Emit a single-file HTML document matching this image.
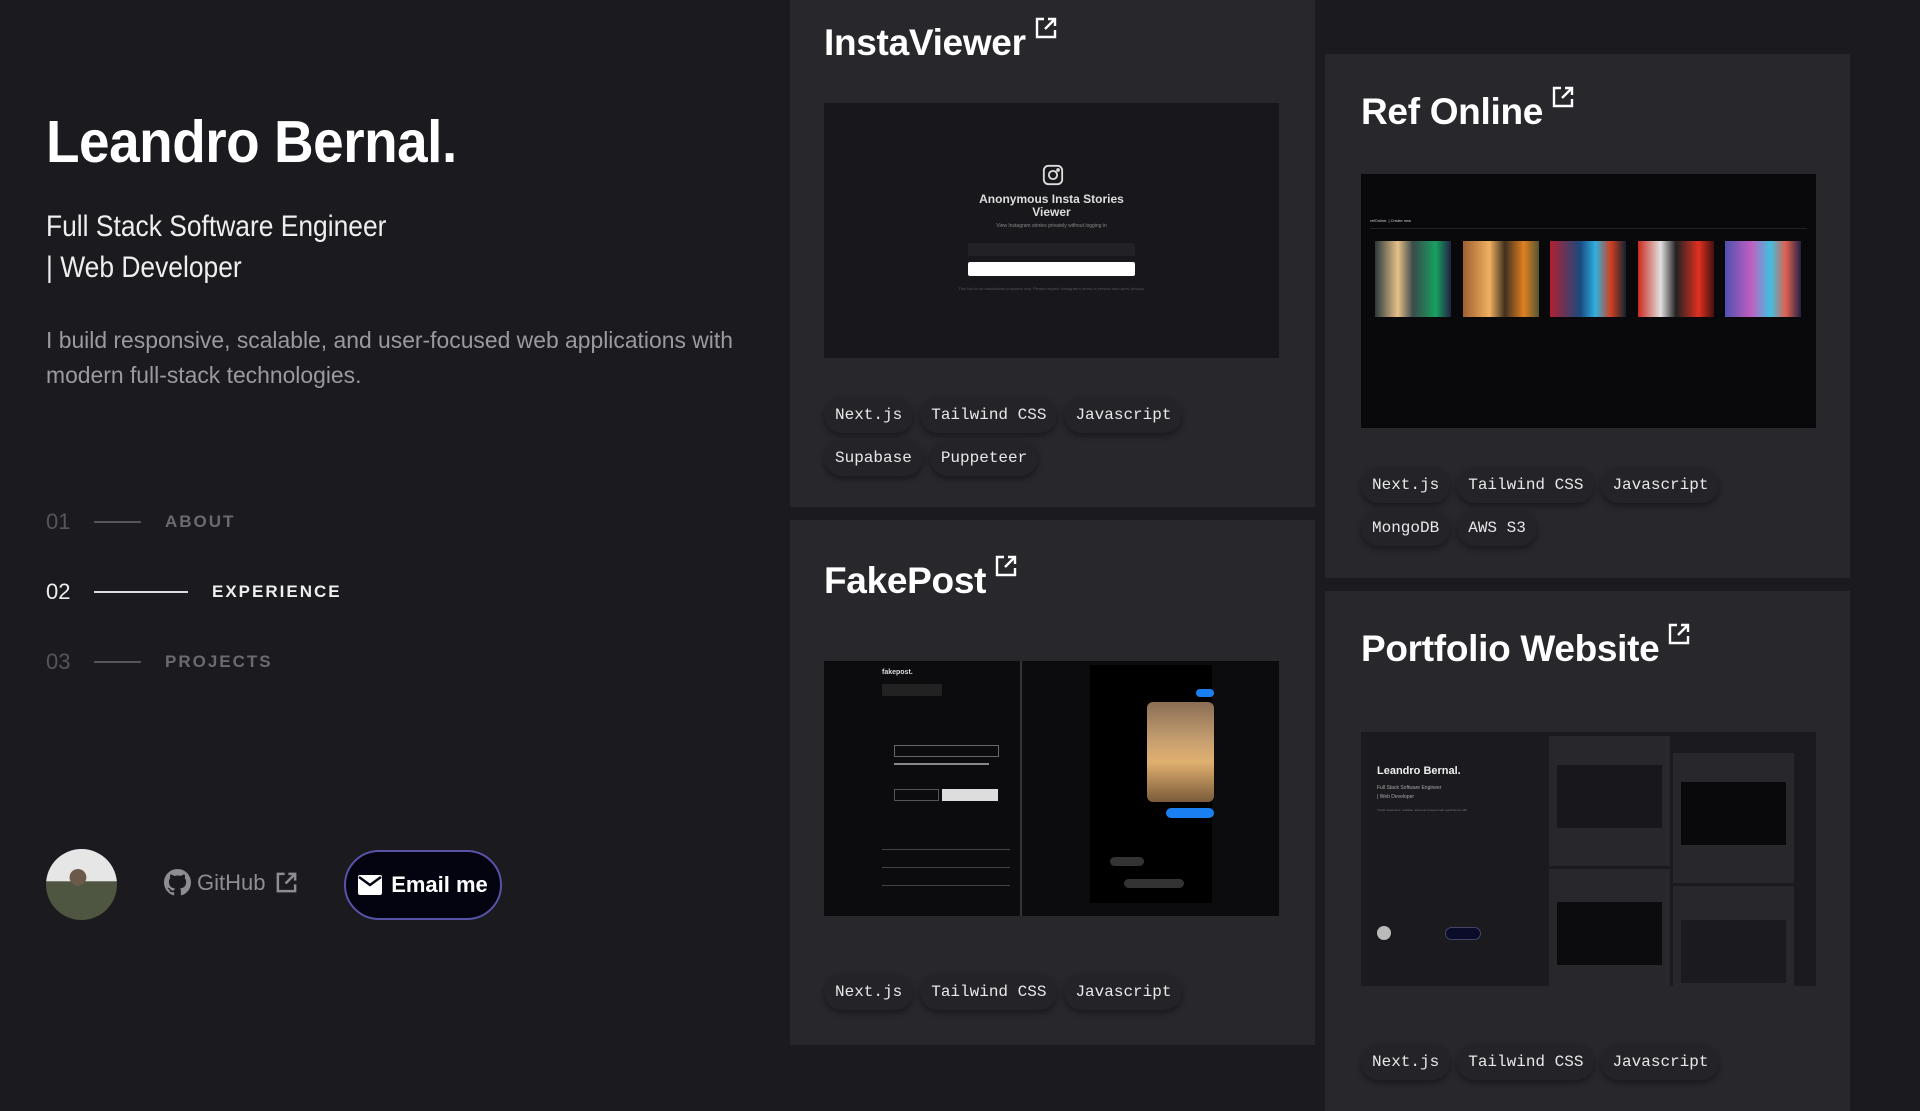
<!DOCTYPE html>
<html><head><meta charset="utf-8"><style>
*{margin:0;padding:0;box-sizing:border-box}
body{width:1920px;height:1080px;background:#1a1a1f;overflow:hidden;position:relative;font-family:"Liberation Sans",sans-serif;color:#fff}
.abs{position:absolute}
.name{left:46px;top:108px;font-size:59px;line-height:68px;font-weight:bold;transform:scaleX(0.93);transform-origin:left top;white-space:nowrap;letter-spacing:-0.5px}
.sub{left:46px;top:206px;font-size:30px;line-height:41px;color:#eee;transform:scaleX(0.88);transform-origin:left top;white-space:nowrap;font-weight:300}
.para{left:46px;top:323px;font-size:23px;line-height:35px;color:#9a9aa0;white-space:nowrap;transform:scaleX(0.995);transform-origin:left top}
.nav{left:46px;display:flex;align-items:center;white-space:nowrap;height:26px}
.nav .n{font-size:22px;width:48px;color:#55555b}
.nav .l{height:2px;background:#55555b;width:47px;margin-right:24px}
.nav .t{font-size:17px;font-weight:bold;letter-spacing:2px;color:#6a6a70}
.card{position:absolute;background:#27272c}
.title{position:absolute;font-size:37px;font-weight:bold;white-space:nowrap;letter-spacing:-0.3px}
.ext{display:inline-block;vertical-align:top;margin-left:8px;margin-top:-6px}
.tags{position:absolute;display:flex;flex-wrap:wrap;gap:7px 7px}
.tag{font-family:"Liberation Mono",monospace;font-size:16px;color:#e8e8ea;background:#242428;border-radius:18px;padding:0 11px;height:36px;line-height:36px;box-shadow:0 3px 6px rgba(0,0,0,.35)}
.shot{position:absolute;overflow:hidden}
</style></head><body>

<div class="abs name">Leandro Bernal.</div>
<div class="abs sub">Full Stack Software Engineer<br>| Web Developer</div>
<div class="abs para">I build responsive, scalable, and user-focused web applications with<br>modern full-stack technologies.</div>

<div class="abs nav" style="top:509px"><span class="n">01</span><span class="l"></span><span class="t">ABOUT</span></div>
<div class="abs nav" style="top:579px"><span class="n" style="color:#eee">02</span><span class="l" style="width:94px;background:#ddd"></span><span class="t" style="color:#eee">EXPERIENCE</span></div>
<div class="abs nav" style="top:649px"><span class="n">03</span><span class="l"></span><span class="t">PROJECTS</span></div>

<div class="abs" style="left:46px;top:849px;width:71px;height:71px;border-radius:50%;background:radial-gradient(circle at 45% 40%,#6b5a4a 0 14%,transparent 15%),linear-gradient(180deg,#e6e6e6 0 45%,#4e5540 46% 100%);overflow:hidden"></div>
<div class="abs" style="left:164px;top:869px;display:flex;align-items:center;color:#8d8d92;font-size:22px">
<svg width="27" height="27" viewBox="0 0 16 16"><path fill="#8d8d92" d="M8 0C3.58 0 0 3.58 0 8c0 3.540 2.29 6.53 5.47 7.59.4.07.55-.17.55-.38 0-.19-.01-.82-.01-1.49-2.01.37-2.530-.49-2.69-.94-.09-.23-.48-.94-.82-1.13-.28-.15-.68-.52-.01-.53.63-.01 1.08.58 1.23.82.72 1.21 1.87.87 2.33.66.07-.52.28-.87.51-1.07-1.78-.2-3.64-.89-3.64-3.95 0-.87.31-1.59.82-2.15-.08-.2-.36-1.02.08-2.12 0 0 .67-.21 2.2.82.64-.18 1.32-.27 2-.27.68 0 1.36.09 2 .27 1.53-1.04 2.2-.82 2.2-.82.44 1.1.16 1.92.08 2.12.51.56.82 1.27.82 2.15 0 3.07-1.87 3.75-3.65 3.95.29.25.54.73.54 1.48 0 1.07-.01 1.93-.01 2.2 0 .21.15.46.55.38A8.013 8.013 0 0016 8c0-4.42-3.58-8-8-8z"/></svg>
<span style="margin-left:6px">GitHub</span>
<svg style="margin-left:10px" width="23" height="23" viewBox="0 0 24 24" fill="none" stroke="#8d8d92" stroke-width="2.6"><path d="M10 3H3v18h18v-7M14 3h7v7M21 3L11 13"/></svg>
</div>
<div class="abs" style="left:344px;top:850px;width:158px;height:70px;border-radius:35px;background:#03040f;border:2px solid #5852a8;display:flex;align-items:center;justify-content:center;font-size:22px;font-weight:bold">
<svg width="24" height="20" viewBox="0 0 24 20"><rect x="0" y="0" width="24" height="20" rx="2" fill="#fff"/><path d="M1 2l11 8 11-8" stroke="#03040f" stroke-width="2.4" fill="none"/></svg>
<span style="margin-left:9px">Email me</span></div>

<!-- InstaViewer -->
<div class="card" style="left:790px;top:0;width:525px;height:507px">
<div class="title" style="left:34px;top:22px">InstaViewer<svg class="ext" width="24" height="24" viewBox="0 0 24 24" fill="none" stroke="#fff" stroke-width="2.4"><path d="M10 3H3v18h18v-7M14 3h7v7M21 3L11 13"/></svg></div>
<div class="shot" style="left:34px;top:103px;width:455px;height:255px;background:#18181c">
 <svg class="abs" style="left:218px;top:61px" width="22" height="22" viewBox="0 0 24 24" fill="none" stroke="#ddd" stroke-width="2"><rect x="2" y="2" width="20" height="20" rx="5"/><circle cx="12" cy="12" r="4.5"/><circle cx="17.5" cy="6.5" r="1" fill="#ddd"/></svg>
 <div class="abs" style="left:0;width:455px;top:90px;text-align:center;font-size:12px;font-weight:bold;color:#ddd;line-height:13px">Anonymous Insta Stories<br>Viewer</div>
 <div class="abs" style="left:0;width:455px;top:120px;text-align:center;font-size:5px;color:#888">View Instagram stories privately without logging in</div>
 <div class="abs" style="left:144px;top:140px;width:167px;height:13px;background:#222226;border-radius:2px"></div>
 <div class="abs" style="left:144px;top:159px;width:167px;height:14px;background:#fff;border-radius:2px"></div>
 <div class="abs" style="left:0;width:455px;top:183px;text-align:center;font-size:4px;color:#555">This tool is for educational purposes only. Please respect Instagram's terms of service and users' privacy.</div>
</div>
<div class="tags" style="left:34px;top:397px;width:440px"><span class="tag">Next.js</span><span class="tag">Tailwind CSS</span><span class="tag">Javascript</span><span class="tag">Supabase</span><span class="tag">Puppeteer</span></div>
</div>

<!-- FakePost -->
<div class="card" style="left:790px;top:520px;width:525px;height:525px">
<div class="title" style="left:34px;top:40px">FakePost<svg class="ext" width="24" height="24" viewBox="0 0 24 24" fill="none" stroke="#fff" stroke-width="2.4"><path d="M10 3H3v18h18v-7M14 3h7v7M21 3L11 13"/></svg></div>
<div class="shot" style="left:34px;top:141px;width:455px;height:255px;background:#0c0c0e">
 <div class="abs" style="left:196px;top:0;width:2px;height:255px;background:#333"></div>
 <div class="abs" style="left:58px;top:8px;font-size:7px;font-weight:bold;color:#ddd">fakepost.</div>
 <div class="abs" style="left:58px;top:23px;width:60px;height:12px;background:#222;border-radius:2px"></div>
 <div class="abs" style="left:70px;top:84px;width:105px;height:12px;border:1px solid #666"></div>
 <div class="abs" style="left:70px;top:102px;width:95px;height:2px;background:#888"></div>
 <div class="abs" style="left:70px;top:128px;width:45px;height:12px;border:1px solid #555"></div>
 <div class="abs" style="left:118px;top:128px;width:56px;height:12px;background:#ddd"></div>
 <div class="abs" style="left:58px;top:188px;width:128px;height:1px;background:#444"></div>
 <div class="abs" style="left:58px;top:206px;width:128px;height:1px;background:#444"></div>
 <div class="abs" style="left:58px;top:224px;width:128px;height:1px;background:#444"></div>
 <div class="abs" style="left:266px;top:4px;width:122px;height:238px;background:#000"></div>
 <div class="abs" style="left:323px;top:41px;width:67px;height:100px;border-radius:6px;background:linear-gradient(180deg,#8a6e55,#c8a070 40%,#e0b070 60%,#7a5a3a)"></div>
 <div class="abs" style="left:342px;top:147px;width:48px;height:10px;background:#1a7ff0;border-radius:6px"></div>
 <div class="abs" style="left:372px;top:28px;width:18px;height:8px;background:#1a7ff0;border-radius:6px"></div>
 <div class="abs" style="left:286px;top:196px;width:34px;height:9px;background:#333;border-radius:6px"></div>
 <div class="abs" style="left:300px;top:218px;width:60px;height:9px;background:#333;border-radius:6px"></div>
</div>
<div class="tags" style="left:34px;top:454px;width:440px"><span class="tag">Next.js</span><span class="tag">Tailwind CSS</span><span class="tag">Javascript</span></div>
</div>

<!-- Ref Online -->
<div class="card" style="left:1325px;top:54px;width:525px;height:524px">
<div class="title" style="left:36px;top:37px">Ref Online<svg class="ext" width="24" height="24" viewBox="0 0 24 24" fill="none" stroke="#fff" stroke-width="2.4"><path d="M10 3H3v18h18v-7M14 3h7v7M21 3L11 13"/></svg></div>
<div class="shot" style="left:36px;top:120px;width:455px;height:254px;background:#09090b">
 <div class="abs" style="left:9px;top:44px;font-size:4px;color:#ccc">refOnline. | Create new</div>
 <div class="abs" style="left:9px;top:54px;width:437px;height:1px;background:#222"></div>
 <div class="abs" style="left:14px;top:67px;width:76px;height:76px;background:linear-gradient(90deg,#2a3a3a,#e8c08a 30%,#3a4a4a 50%,#18a060 80%,#224)"></div>
 <div class="abs" style="left:102px;top:67px;width:76px;height:76px;background:linear-gradient(90deg,#a06030,#f0b060 35%,#403020 55%,#e08020 80%,#553)"></div>
 <div class="abs" style="left:189px;top:67px;width:76px;height:76px;background:linear-gradient(90deg,#b02030,#1a4a80 40%,#30b0e0 60%,#d04020 80%,#123)"></div>
 <div class="abs" style="left:277px;top:67px;width:76px;height:76px;background:linear-gradient(90deg,#cc2a20,#e0e0e0 30%,#222 50%,#e03020 80%,#411)"></div>
 <div class="abs" style="left:364px;top:67px;width:76px;height:76px;background:linear-gradient(90deg,#5050b0,#c060c0 35%,#40c0e0 60%,#e06050 80%,#224)"></div>
</div>
<div class="tags" style="left:36px;top:413px;width:440px"><span class="tag">Next.js</span><span class="tag">Tailwind CSS</span><span class="tag">Javascript</span><span class="tag">MongoDB</span><span class="tag">AWS S3</span></div>
</div>

<!-- Portfolio -->
<div class="card" style="left:1325px;top:591px;width:525px;height:520px">
<div class="title" style="left:36px;top:37px">Portfolio Website<svg class="ext" width="24" height="24" viewBox="0 0 24 24" fill="none" stroke="#fff" stroke-width="2.4"><path d="M10 3H3v18h18v-7M14 3h7v7M21 3L11 13"/></svg></div>
<div class="shot" style="left:36px;top:141px;width:455px;height:254px;background:#1a1a1f">
 <div class="abs" style="left:16px;top:33px;font-size:11px;font-weight:bold;color:#eee">Leandro Bernal.</div>
 <div class="abs" style="left:16px;top:52px;font-size:5px;color:#aaa;line-height:9px">Full Stack Software Engineer<br>| Web Developer</div>
 <div class="abs" style="left:16px;top:76px;font-size:3px;color:#777">I build responsive, scalable, and user-focused web applications with</div>
 <div class="abs" style="left:16px;top:194px;width:14px;height:14px;border-radius:50%;background:#bbb"></div>
 <div class="abs" style="left:84px;top:195px;width:36px;height:13px;border-radius:7px;background:#0a0c2a;border:1px solid #446"></div>
 <div class="abs" style="left:188px;top:4px;width:121px;height:130px;background:#27272c"></div>
 <div class="abs" style="left:196px;top:33px;width:105px;height:63px;background:#18181c"></div>
 <div class="abs" style="left:188px;top:137px;width:121px;height:117px;background:#27272c"></div>
 <div class="abs" style="left:196px;top:170px;width:105px;height:63px;background:#0c0c0e"></div>
 <div class="abs" style="left:312px;top:21px;width:121px;height:130px;background:#27272c"></div>
 <div class="abs" style="left:320px;top:50px;width:105px;height:63px;background:#09090b"></div>
 <div class="abs" style="left:312px;top:154px;width:121px;height:100px;background:#27272c"></div>
 <div class="abs" style="left:320px;top:188px;width:105px;height:63px;background:#1a1a1f"></div>
</div>
<div class="tags" style="left:36px;top:453px;width:440px"><span class="tag">Next.js</span><span class="tag">Tailwind CSS</span><span class="tag">Javascript</span></div>
</div>

</body></html>
